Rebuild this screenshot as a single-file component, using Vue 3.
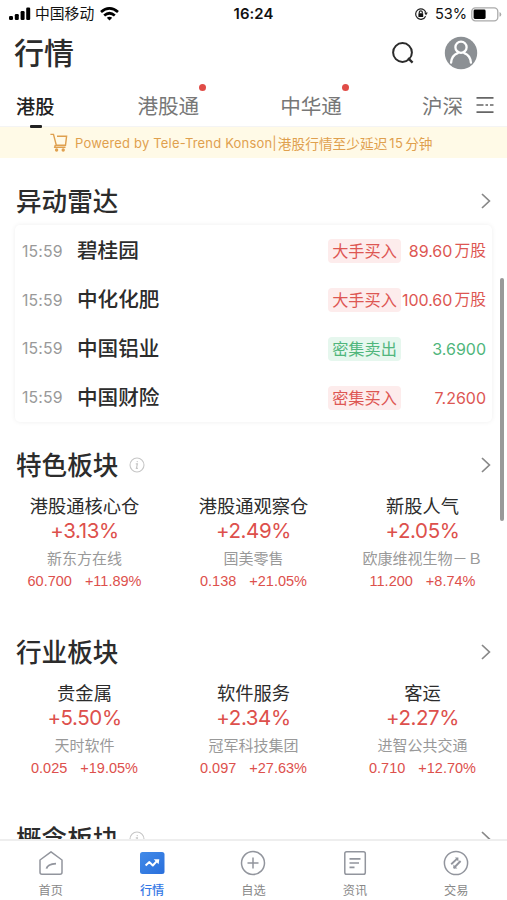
<script setup>
const tabs = [
  { name: '港股', cls: 'tab-hk', active: true },
  { name: '港股通', cls: 'tab-connect', dot: true },
  { name: '中华通', cls: 'tab-china', dot: true },
  { name: '沪深', cls: 'tab-ashare' },
]

const radar = [
  { name: '碧桂园', tag: '大手买入', num: '89.60', unit: '万股', dir: 'up' },
  { name: '中化化肥', tag: '大手买入', num: '100.60', unit: '万股', dir: 'up' },
  { name: '中国铝业', tag: '密集卖出', num: '3.6900', unit: '', dir: 'down' },
  { name: '中国财险', tag: '密集买入', num: '7.2600', unit: '', dir: 'up' },
]

const sections = [
  {
    title: '特色板块',
    info: true,
    items: [
      { name: '港股通核心仓', pct: '+3.13%', stock: '新东方在线', price: '60.700', chg: '+11.89%' },
      { name: '港股通观察仓', pct: '+2.49%', stock: '国美零售', price: '0.138', chg: '+21.05%' },
      { name: '新股人气', pct: '+2.05%', stock: '欧康维视生物－Ｂ', price: '11.200', chg: '+8.74%' },
    ],
  },
  {
    title: '行业板块',
    items: [
      { name: '贵金属', pct: '+5.50%', stock: '天时软件', price: '0.025', chg: '+19.05%' },
      { name: '软件服务', pct: '+2.34%', stock: '冠军科技集团', price: '0.097', chg: '+27.63%' },
      { name: '客运', pct: '+2.27%', stock: '进智公共交通', price: '0.710', chg: '+12.70%' },
    ],
  },
  { title: '概念板块', info: true, items: [] },
]

const nav = [
  { name: '首页', icon: 'home' },
  { name: '行情', icon: 'chart', active: true },
  { name: '自选', icon: 'plus' },
  { name: '资讯', icon: 'news' },
  { name: '交易', icon: 'trade' },
]
</script>

<template>
  <div class="screen">
    <div class="status">
      <div class="status-left">
        <svg class="signal" width="22" height="14" viewBox="0 0 22 14">
          <rect x="0" y="9" width="4" height="4" rx="1.2" />
          <rect x="5.8" y="7" width="4" height="6" rx="1.2" />
          <rect x="11.6" y="4" width="4" height="9" rx="1.2" />
          <rect x="17.2" y="0.5" width="4" height="12.5" rx="1.2" />
        </svg>
        <span class="carrier">中国移动</span>
        <svg class="wifi" width="19" height="14" viewBox="0 0 19 14" fill="none" stroke="#000" stroke-width="2.7">
          <path d="M1 5.1Q9.5 -2.3 18 5.1" />
          <path d="M4.2 8.5Q9.5 4 14.8 8.5" />
          <path d="M6.8 10.8Q9.5 8.6 12.2 10.8L9.5 13.5Z" fill="#000" stroke="none" />
        </svg>
      </div>
      <div class="clock">16:24</div>
      <div class="status-right">
        <svg width="14" height="14" viewBox="0 0 14 14" fill="none" stroke="#222" stroke-width="1.2">
          <path d="M11.6 9.2A5.2 5.2 0 1 1 11.8 5.5" />
          <path d="M10.2 5.6h3.6l-1.8 2.8z" fill="#222" stroke="none" />
          <rect x="4.4" y="6.3" width="4.8" height="3.7" rx=".5" fill="#111" stroke="none" />
          <path d="M5.3 6.5V5.3a1.5 1.5 0 0 1 3 0v1.2" />
        </svg>
        <span class="battery-text">53%</span>
        <svg width="31" height="15" viewBox="0 0 31 15">
          <rect x=".8" y=".8" width="26" height="13" rx="3.6" fill="#fff" stroke="#aaa" stroke-width="1.3" />
          <rect x="2.6" y="2.6" width="12" height="9.4" rx="1.4" />
          <path d="M28.5 5v4.8q1.8-.6 1.8-2.4T28.5 5" fill="#aaa" />
        </svg>
      </div>
    </div>

    <header class="header">
      <h1>行情</h1>
      <div class="header-icons">
        <svg width="24" height="24" viewBox="0 0 24 24" fill="none" stroke="#2b2b2b" stroke-width="2">
          <circle cx="11.5" cy="11.5" r="9.4" />
          <path d="M17 17.2l4.6 4.4" stroke-width="2.3" />
        </svg>
        <svg width="34" height="34" viewBox="0 0 34 34" fill="none" stroke="#fff" stroke-width="2.3" stroke-linecap="round">
          <circle cx="17" cy="17" r="16.2" fill="#8c9094" stroke="none" />
          <circle cx="17" cy="11.2" r="5.6" />
          <path d="M7.1 26.6c.3-4.6 2.7-8 6.6-9.5M26.9 26.6c-.3-4.6-2.7-8-6.6-9.5" />
        </svg>
      </div>
    </header>

    <nav class="tabs">
      <div v-for="t in tabs" :key="t.name" class="tab" :class="[t.cls, { active: t.active }]">
        {{ t.name }}<i v-if="t.dot" class="dot"></i>
      </div>
      <svg class="more" width="18" height="18" viewBox="0 0 18 18" stroke="#666" stroke-width="1.7">
        <path d="M.5 1.8h17M.5 9h7M9.5 9h2.5M14 9h3.5M.5 16.2h17" />
      </svg>
    </nav>

    <div class="banner">
      <svg width="18" height="19" viewBox="0 0 18 19" fill="none" stroke="#dfa04e" stroke-width="1.4">
        <path d="M.4 1.4h3.1l2.8 10.8h9.2L16.6 3.2H7M5.3 12l-.6 2.3h10.8" />
        <circle cx="6.6" cy="17" r="1" fill="#dfa04e" />
        <circle cx="13.2" cy="17" r="1" fill="#dfa04e" />
      </svg>
      <span class="banner-en">Powered by Tele-Trend Konson|</span>
      <span class="banner-cn">港股行情至少延迟</span>
      <span class="banner-num">15</span>
      <span class="banner-cn">分钟</span>
    </div>

    <main class="content">
      <div class="sec-head first">
        <h2>异动雷达</h2>
        <svg class="arrow" width="10" height="16" viewBox="0 0 10 16"><path d="M1 1l7.4 7L1 15" /></svg>
      </div>
      <div class="card">
        <div v-for="r in radar" :key="r.name" class="row">
          <span class="time">15:59</span>
          <span class="stock">{{ r.name }}</span>
          <span class="tag" :class="r.dir">{{ r.tag }}</span>
          <span class="value" :class="r.dir">{{ r.num }}<span v-if="r.unit" class="unit">{{ r.unit }}</span></span>
        </div>
      </div>

      <section v-for="s in sections" :key="s.title" class="section">
        <div class="sec-head">
          <h2>{{ s.title }}</h2>
          <svg v-if="s.info" class="info" width="16" height="16" viewBox="0 0 16 16" fill="none" stroke="#c6c6c6">
            <circle cx="8" cy="8" r="7" stroke-width="1.1" />
            <path d="M6.8 6.8h1.6l-1 4.6h1.5M8.4 4.1l-.2 1" stroke-width="1.2" />
          </svg>
          <svg class="arrow" width="10" height="16" viewBox="0 0 10 16"><path d="M1 1l7.4 7L1 15" /></svg>
        </div>
        <div class="grid">
          <div v-for="i in s.items" :key="i.name" class="cell">
            <div class="cell-name">{{ i.name }}</div>
            <div class="cell-pct">{{ i.pct }}</div>
            <div class="cell-stock">{{ i.stock }}</div>
            <div class="cell-vals"><span>{{ i.price }}</span><span>{{ i.chg }}</span></div>
          </div>
        </div>
      </section>
      <div class="scrollbar"></div>
    </main>

    <footer class="nav">
      <div v-for="n in nav" :key="n.name" class="nav-item" :class="{ active: n.active }">
        <svg width="26" height="26" viewBox="0 0 26 26" fill="none" stroke="#92959d" stroke-width="1.5" stroke-linejoin="round">
          <template v-if="n.icon === 'home'">
            <path d="M13 1.8l11 8.2v12.2q0 2-2 2H4q-2 0-2-2V10z" />
            <path d="M8.5 18.6q1-4.6 9.5-5" stroke-width="1.9" />
          </template>
          <template v-else-if="n.icon === 'chart'">
            <defs>
              <linearGradient id="chartFill" x1="0" y1="0" x2="1" y2="1">
                <stop offset="0" stop-color="#438be8" />
                <stop offset="1" stop-color="#296fdc" />
              </linearGradient>
            </defs>
            <rect x="1" y="2" width="24.5" height="22" rx="2.5" fill="url(#chartFill)" stroke="none" />
            <path d="M6.6 15.6l3.8-3.5 3.4 3.4 4.2-4.7" stroke="#fff" stroke-width="2" />
            <path d="M14.7 9.2h5.6l-.7 5z" fill="#fff" stroke="none" />
          </template>
          <template v-else-if="n.icon === 'plus'">
            <circle cx="13" cy="13" r="11.5" />
            <path d="M13 7.5v11M7.5 13h11" />
          </template>
          <template v-else-if="n.icon === 'news'">
            <rect x="2.8" y="1.8" width="20.5" height="22.5" rx="1.8" />
            <path d="M7.5 8.8h11M7.5 13h9.5M7.5 17.4h5" stroke-width="1.7" />
          </template>
          <template v-else>
            <circle cx="13" cy="13" r="11.6" />
            <path d="M8.2 14.2l6-5.6M10.8 18l6.8-7" stroke-width="1.9" />
            <path d="M12 7.6h3.4v4.2zM14.4 18.6h-4v-4z" fill="#92959d" stroke="none" />
          </template>
        </svg>
        <span>{{ n.name }}</span>
      </div>
    </footer>
  </div>
</template>

<style>
body {
  background: #fff;
  overflow: hidden;
}
</style>

<style scoped>
.screen {
  width: 507px;
  height: 900px;
  display: flex;
  flex-direction: column;
  overflow: hidden;
  background: #fff;
  color: #2c2c2c;
  font-family: Inter, "Noto Sans CJK SC", sans-serif;
  white-space: nowrap;
}
h1, h2 { margin: 0; font-weight: 500; }
svg { flex: none; }
.status {
  height: 28px;
  flex: none;
  display: grid;
  grid-template-columns: 1fr auto 1fr;
  align-items: center;
  color: #111;
}
.status-left { display: flex; align-items: center; padding-left: 9px; }
.carrier { font-size: 14.8px; margin: 0 6px 0 4px; line-height: 20px; }
.clock { font-size: 14.9px; font-weight: 600; line-height: 20px; letter-spacing: .1px; }
.status-right { display: flex; align-items: center; justify-content: flex-end; padding-right: 5px; }
.battery-text { font-size: 14.6px; margin: 0 4px 0 7px; line-height: 20px; letter-spacing: -.1px; }

.header { height: 50px; flex: none; display: flex; align-items: center; justify-content: space-between; padding: 0 29px 0 14px; }
h1 { font-size: 30px; line-height: 40px; }
.header-icons { display: flex; align-items: center; gap: 29px; margin-top: -1px; }

.tabs { height: 49px; flex: none; display: flex; align-items: center; color: #777; padding: 0 13px 0 16px; box-sizing: border-box; border-bottom: 1px solid #f4f4f4; }
.tab { position: relative; font-size: 20.6px; line-height: 30px; margin-top: 9px; }
.tab-hk { font-size: 19.2px; }
.tab-connect { margin-left: 83px; }
.tab-china { margin-left: 81px; }
.tab-ashare { margin-left: 80px; }
.tab.active { color: #222; font-weight: 500; }
.tab.active::after { content: ""; position: absolute; left: 14px; bottom: -6px; width: 12px; height: 3px; border-radius: 1px; background: #222; }
.dot { position: absolute; right: -7px; top: -8px; width: 7px; height: 7px; border-radius: 50%; background: #e04c47; }
.more { margin: 5px 0 0 auto; }

.banner { height: 31px; flex: none; display: flex; align-items: center; padding-left: 50px; background: #fffae7; color: #dfa04e; font-size: 13px; }
.banner-en { margin-left: 7px; font-size: 13px; letter-spacing: .18px; }
.banner-cn { font-size: 13.7px; margin-left: 1px; }
.banner-num { margin-left: 2px; margin-right: 1px; letter-spacing: .3px; }

.content { position: relative; flex: 1; min-height: 0; overflow: hidden; }
.sec-head { height: 38px; display: flex; align-items: center; padding: 0 16px; }
.sec-head.first { padding-top: 24px; }
h2 { font-size: 25.6px; line-height: 38px; position: relative; top: 1px; }
.arrow { margin-left: auto; fill: none; stroke: #888; stroke-width: 1.7; }
.info { margin-left: 11px; }

.card { height: 197px; margin: 5px 15px 24px; padding: 2px 6px 0 7px; box-sizing: border-box; border-radius: 5px; box-shadow: 0 0 5px rgba(0, 0, 0, .07); }
.row { height: 48.8px; display: flex; align-items: center; }
.time { width: 55px; color: #999; font-size: 15.8px; letter-spacing: .15px; }
.stock { font-size: 20.6px; line-height: 30px; font-weight: 500; }
.tag { margin-left: auto; width: 73px; height: 24px; line-height: 24px; font-size: 16.2px; border-radius: 4px; text-align: center; }
.tag.up { background: #fdecec; }
.tag.down { background: #e6f7ee; }
.up { color: #dd5753; }
.down { color: #50b67c; }
.value { width: 85px; display: flex; align-items: center; justify-content: flex-end; font-size: 16px; line-height: 24px; }
.unit { font-size: 15.8px; margin-left: 2px; }

.section { height: 187px; }
.grid { display: grid; grid-template-columns: repeat(3, 1fr); }
.cell { text-align: center; padding-top: 9px; }
.cell-name { font-size: 18.3px; line-height: 26px; }
.cell-pct { font-size: 20.5px; line-height: 24px; color: #dd504c; letter-spacing: -.4px; }
.cell-stock { font-size: 15px; line-height: 22px; color: #999; margin-top: 5px; }
.cell-vals { display: flex; justify-content: center; gap: 13px; font-family: "Liberation Sans", sans-serif; font-size: 14.5px; line-height: 20px; color: #dd504c; padding-top: 1px; }

.scrollbar { position: absolute; right: 3px; top: 120px; width: 4px; height: 243px; border-radius: 2px; background: #999; }

.nav { height: 61px; flex: none; box-sizing: border-box; border-top: 2px solid #eee; display: grid; grid-template-columns: repeat(5, 1fr); background: #fff; }
.nav-item { display: flex; flex-direction: column; align-items: center; padding-top: 9px; font-size: 12.2px; line-height: 18px; color: #888; }
.nav-item span { margin-top: 6px; }
.nav-item.active { color: #3478e5; font-weight: 500; }
</style>
